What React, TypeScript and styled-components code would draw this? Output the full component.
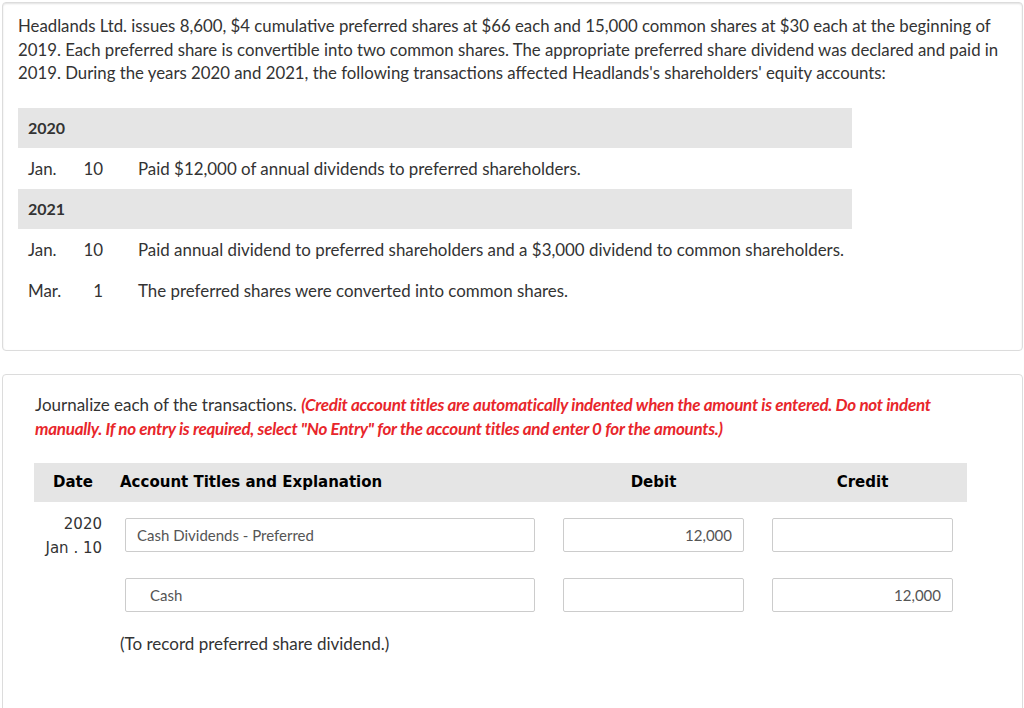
import { Fragment } from 'react';
import styled, { createGlobalStyle } from 'styled-components';

const GlobalStyle = createGlobalStyle`
  html, body {
    margin: 0;
    padding: 0;
    background: #ffffff;
  }
  body {
    font-family: Lato, "Open Sans", "Liberation Sans", sans-serif;
    color: #333333;
  }
  * { box-sizing: border-box; }
`;

const Styled = {
  Page: styled.div`
    display: flex;
    flex-direction: column;
    gap: 23px;
    padding: 2px 1px 0 2px;
  `,

  Card: styled.section<{ $shadowTop?: boolean }>`
    border: 1px solid #dcdcdc;
    border-radius: 4px;
    background: #fff;
    box-shadow: ${({ $shadowTop }) => ($shadowTop ? 'inset 0 1px 2px rgba(0,0,0,0.12)' : 'none')};
  `,

  ProblemBody: styled.div`
    padding: 11px 15px 39px;
  `,

  Paragraph: styled.p`
    margin: 0;
    font-size: 16.8px;
    line-height: 23.5px;
    color: #333;
  `,

  Events: styled.div`
    margin-top: 23px;
    width: 834px;
    display: flex;
    flex-direction: column;
  `,

  YearBand: styled.div`
    height: 40px;
    background: #e5e5e5;
    display: flex;
    align-items: center;
    padding-left: 10px;
    font-size: 16px;
    font-weight: 700;
    color: #333;
  `,

  EventRow: styled.div`
    height: 41px;
    display: grid;
    grid-template-columns: 55px 35px 1fr;
    align-items: center;
    font-size: 16.9px;
    color: #333;
  `,

  Month: styled.span`
    padding-left: 10px;
  `,

  Day: styled.span`
    text-align: right;
    padding-right: 5px;
  `,

  Desc: styled.span`
    padding-left: 30px;
  `,

  JournalBody: styled.div`
    padding: 18px 32px 80px;
  `,

  Instruction: styled.p`
    margin: 0;
    font-size: 17px;
    line-height: 24px;
    color: #333;
  `,

  Warning: styled.em`
    color: #e8262b;
    font-weight: 700;
    letter-spacing: -0.27px;
  `,

  JournalGrid: styled.div`
    margin-top: 22px;
    display: grid;
    grid-template-columns: 62px 410px 181px 181px;
    column-gap: 28px;
    row-gap: 26px;
  `,

  HeadRow: styled.div`
    grid-column: 1 / -1;
    height: 39px;
    margin: 0 -14px -10px -1px;
    background: #e5e5e5;
    display: grid;
    grid-template-columns: 63px 410px 181px 181px;
    column-gap: 28px;
    align-items: center;
    font-family: "DejaVu Sans", Verdana, sans-serif;
    font-weight: 700;
    font-size: 15px;
    color: #000;
  `,

  HeadCell: styled.div`
    text-align: center;
  `,

  HeadDate: styled.div`
    padding-left: 19px;
  `,

  HeadAccount: styled.div`
    margin-left: -5px;
  `,

  DateCell: styled.div`
    height: 34px;
    margin: -6px -5px 0 0;
    text-align: right;
    font-family: "DejaVu Sans", Verdana, sans-serif;
    font-size: 15px;
    line-height: 24px;
    color: #333;
  `,

  Field: styled.div<{ $indent?: boolean; $amount?: boolean }>`
    height: 34px;
    border: 1px solid #cccccc;
    border-radius: 2px;
    background: #fff;
    display: flex;
    align-items: center;
    justify-content: ${({ $amount }) => ($amount ? 'flex-end' : 'flex-start')};
    padding: 0 ${({ $amount }) => ($amount ? '11px' : '0')} 0 ${({ $indent }) => ($indent ? '24px' : '11px')};
    font-size: 15px;
    color: #555;
  `,

  Note: styled.div`
    grid-column: 2 / 3;
    margin: -6px 0 0 -5px;
    font-size: 17px;
    line-height: 24px;
    color: #333;
  `,
};

const events = [
  { year: '2020', rows: [{ month: 'Jan.', day: '10', text: 'Paid $12,000 of annual dividends to preferred shareholders.' }] },
  {
    year: '2021',
    rows: [
      { month: 'Jan.', day: '10', text: 'Paid annual dividend to preferred shareholders and a $3,000 dividend to common shareholders.' },
      { month: 'Mar.', day: '1', text: 'The preferred shares were converted into common shares.' },
    ],
  },
];

const entries = [
  { date: ['2020', 'Jan . 10'], account: 'Cash Dividends - Preferred', debit: '12,000', credit: '', indent: false },
  { date: null, account: 'Cash', debit: '', credit: '12,000', indent: true },
];

export default function App() {
  return (
    <>
      <GlobalStyle />
      <Styled.Page>
        <Styled.Card $shadowTop>
          <Styled.ProblemBody>
            <Styled.Paragraph>
              Headlands Ltd. issues 8,600, $4 cumulative preferred shares at $66 each and 15,000 common shares at $30 each at the beginning of 2019. Each preferred share is convertible into two common shares. The appropriate preferred share dividend was declared and paid in 2019. During the years 2020 and 2021, the following transactions affected Headlands's shareholders' equity accounts:
            </Styled.Paragraph>

            <Styled.Events>
              {events.map(({ year, rows }) => (
                <div key={year}>
                  <Styled.YearBand>{year}</Styled.YearBand>
                  {rows.map((r) => (
                    <Styled.EventRow key={r.month + r.day}>
                      <Styled.Month>{r.month}</Styled.Month>
                      <Styled.Day>{r.day}</Styled.Day>
                      <Styled.Desc>{r.text}</Styled.Desc>
                    </Styled.EventRow>
                  ))}
                </div>
              ))}
            </Styled.Events>
          </Styled.ProblemBody>
        </Styled.Card>

        <Styled.Card>
          <Styled.JournalBody>
            <Styled.Instruction>
              Journalize each of the transactions.{' '}
              <Styled.Warning>
                (Credit account titles are automatically indented when the amount is entered. Do not indent manually. If no entry is required, select "No Entry" for the account titles and enter 0 for the amounts.)
              </Styled.Warning>
            </Styled.Instruction>

            <Styled.JournalGrid>
              <Styled.HeadRow>
                <Styled.HeadDate>Date</Styled.HeadDate>
                <Styled.HeadAccount>Account Titles and Explanation</Styled.HeadAccount>
                <Styled.HeadCell>Debit</Styled.HeadCell>
                <Styled.HeadCell>Credit</Styled.HeadCell>
              </Styled.HeadRow>

              {entries.map((e) => (
                <Fragment key={e.account}>
                  <Styled.DateCell>
                    {e.date && e.date.map((d) => <div key={d}>{d}</div>)}
                  </Styled.DateCell>
                  <Styled.Field $indent={e.indent}>{e.account}</Styled.Field>
                  <Styled.Field $amount>{e.debit}</Styled.Field>
                  <Styled.Field $amount>{e.credit}</Styled.Field>
                </Fragment>
              ))}

              <Styled.Note>(To record preferred share dividend.)</Styled.Note>
            </Styled.JournalGrid>
          </Styled.JournalBody>
        </Styled.Card>
      </Styled.Page>
    </>
  );
}
